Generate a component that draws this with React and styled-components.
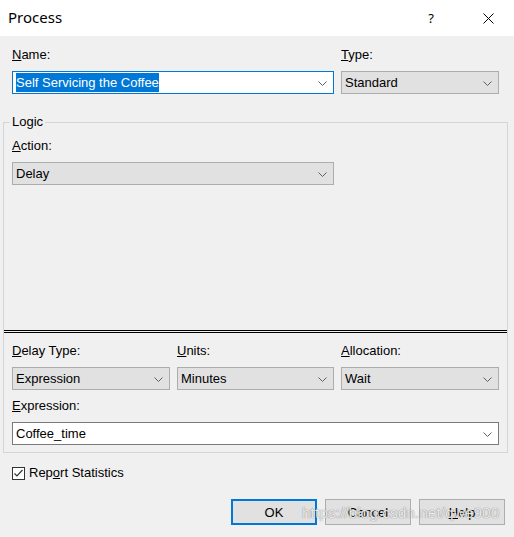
import * as React from 'react';
import styled, { createGlobalStyle } from 'styled-components';

const GlobalStyle = createGlobalStyle`
  html, body {
    margin: 0;
    padding: 0;
    background: #f0f0f0;
  }
  body {
    font-family: 'Liberation Sans', Arial, sans-serif;
    font-size: 13px;
    color: #000;
  }
`;

const Window = styled.div`
  position: relative;
  width: 514px;
  height: 537px;
  background: #f0f0f0;
  overflow: hidden;
  box-sizing: border-box;
`;

const TitleBar = styled.div`
  height: 36px;
  background: #ffffff;
  display: flex;
  align-items: center;
  padding-left: 8px;
`;

const Title = styled.div`
  flex: 1;
  font-family: 'Noto Sans', 'Open Sans', sans-serif;
  font-size: 15px;
  color: #000;
  margin-top: -2px;
`;

const CaptionButton = styled.div`
  width: ${(p) => p.$w}px;
  height: 36px;
  display: flex;
  align-items: center;
  justify-content: center;
  font-family: 'Noto Sans', sans-serif;
  font-size: 13px;
  color: #000;
  margin-right: ${(p) => p.$mr || 0}px;
`;

const TopRow = styled.div`
  display: grid;
  grid-template-columns: 322px 158px;
  column-gap: 7px;
  padding: 11px 0 0 12px;
`;

const Field = styled.div`
  display: flex;
  flex-direction: column;
  gap: 8px;
`;

const Label = styled.div`
  line-height: 16px;
  height: 16px;
  white-space: nowrap;
`;

const Combo = styled.div`
  position: relative;
  height: 23px;
  box-sizing: border-box;
  border: 1px solid ${(p) => (p.$focused ? '#0078d7' : p.$editable ? '#7a7a7a' : '#adadad')};
  background: ${(p) => (p.$focused || p.$editable ? '#ffffff' : '#e1e1e1')};
  display: flex;
  align-items: center;
  padding-left: 3px;
  padding-right: 20px;
  white-space: nowrap;
`;

const Selected = styled.span`
  display: inline-block;
  background: #0078d7;
  color: #ffffff;
  height: 19px;
  line-height: 19px;
`;

const Chevron = styled.svg`
  position: absolute;
  right: 6px;
  top: 50%;
  margin-top: -2px;
`;

const Group = styled.fieldset`
  margin: 20px 0 0 3px;
  padding: 0;
  width: 505px;
  box-sizing: border-box;
  border: 1px solid #d5d5d5;
  min-width: 0;
`;

const Legend = styled.legend`
  margin-left: 6px;
  padding: 0 2px;
  line-height: 16px;
`;

const UpperPane = styled.div`
  height: 200px;
  box-sizing: border-box;
  padding: 8px 0 0 8px;
  display: grid;
  grid-template-columns: 322px;
  align-content: start;
`;

const Divider = styled.div`
  height: 1px;
  border-top: 1px solid #000;
  border-bottom: 1px solid #000;
`;

const LowerPane = styled.div`
  padding: 10px 0 7px 8px;
  display: grid;
  grid-template-columns: 158px 157px 158px;
  column-gap: 7px;
  row-gap: 8px;
`;

const Wide = styled.div`
  grid-column: 1 / -1;
  width: 487px;
`;

const CheckRow = styled.label`
  display: flex;
  align-items: center;
  gap: 4px;
  margin: 12px 0 0 12px;
  height: 16px;
  line-height: 16px;
`;

const CheckBox = styled.span`
  width: 13px;
  height: 13px;
  box-sizing: border-box;
  border: 1px solid #333333;
  background: #ffffff;
  display: flex;
  align-items: center;
  justify-content: center;
`;

const ButtonRow = styled.div`
  display: flex;
  justify-content: flex-end;
  gap: 8px;
  padding-right: 9px;
  margin-top: 18px;
`;

const Button = styled.button`
  width: 86px;
  height: 26px;
  box-sizing: border-box;
  background: #e1e1e1;
  border: ${(p) => (p.$default ? '2px solid #0078d7' : '1px solid #adadad')};
  font-family: 'Liberation Sans', Arial, sans-serif;
  font-size: 13px;
  color: #000;
  padding: 0;
  margin: 0;
`;

const Watermark = styled.div`
  position: absolute;
  left: 302px;
  top: 504px;
  font-family: 'Liberation Sans', Arial, sans-serif;
  font-size: 15.5px;
  color: rgba(255, 255, 255, 0.85);
  text-shadow: 0 0 1px rgba(60, 60, 60, 0.55), 0 0 1px rgba(60, 60, 60, 0.35);
  pointer-events: none;
  white-space: nowrap;
`;

const Arrow = () => (
  <Chevron width="9" height="5" viewBox="0 0 9 5">
    <polyline points="0.5,0.5 4.5,4.5 8.5,0.5" fill="none" stroke="#606060" strokeWidth="1" />
  </Chevron>
);

const Select = ({ value, children, ...rest }) => (
  <Combo {...rest}>
    {children || value}
    <Arrow />
  </Combo>
);

const App = () => {
  return (
    <Window>
      <GlobalStyle />
      <TitleBar>
        <Title>Process</Title>
        <CaptionButton $w={46} $mr={11}>?</CaptionButton>
        <CaptionButton $w={46} $mr={3}>
          <svg width="11" height="11" viewBox="0 0 11 11">
            <path d="M0.5 0.5 L10.5 10.5 M10.5 0.5 L0.5 10.5" stroke="#000" strokeWidth="1" fill="none" />
          </svg>
        </CaptionButton>
      </TitleBar>

      <TopRow>
        <Field>
          <Label><u>N</u>ame:</Label>
          <Select $focused>
            <Selected>Self Servicing the Coffee</Selected>
          </Select>
        </Field>
        <Field>
          <Label><u>T</u>ype:</Label>
          <Select value="Standard" />
        </Field>
      </TopRow>

      <Group>
        <Legend>Logic</Legend>
        <UpperPane>
          <Field>
            <Label><u>A</u>ction:</Label>
            <Select value="Delay" />
          </Field>
        </UpperPane>
        <Divider />
        <LowerPane>
          <Field>
            <Label><u>D</u>elay Type:</Label>
            <Select value="Expression" />
          </Field>
          <Field>
            <Label><u>U</u>nits:</Label>
            <Select value="Minutes" />
          </Field>
          <Field>
            <Label><u>A</u>llocation:</Label>
            <Select value="Wait" />
          </Field>
          <Wide>
            <Field>
              <Label><u>E</u>xpression:</Label>
              <Select $editable value="Coffee_time" />
            </Field>
          </Wide>
        </LowerPane>
      </Group>

      <CheckRow>
        <CheckBox>
          <svg width="11" height="11" viewBox="0 0 11 11">
            <polyline points="1.5,5.5 4,8 9.5,2" fill="none" stroke="#333" strokeWidth="1.2" />
          </svg>
        </CheckBox>
        <span>Rep<u>o</u>rt Statistics</span>
      </CheckRow>

      <ButtonRow>
        <Button $default>OK</Button>
        <Button>Cancel</Button>
        <Button><u>H</u>elp</Button>
      </ButtonRow>

      <Watermark>https://blog.csdn.net/qwe900</Watermark>
    </Window>
  );
};

export default App;
